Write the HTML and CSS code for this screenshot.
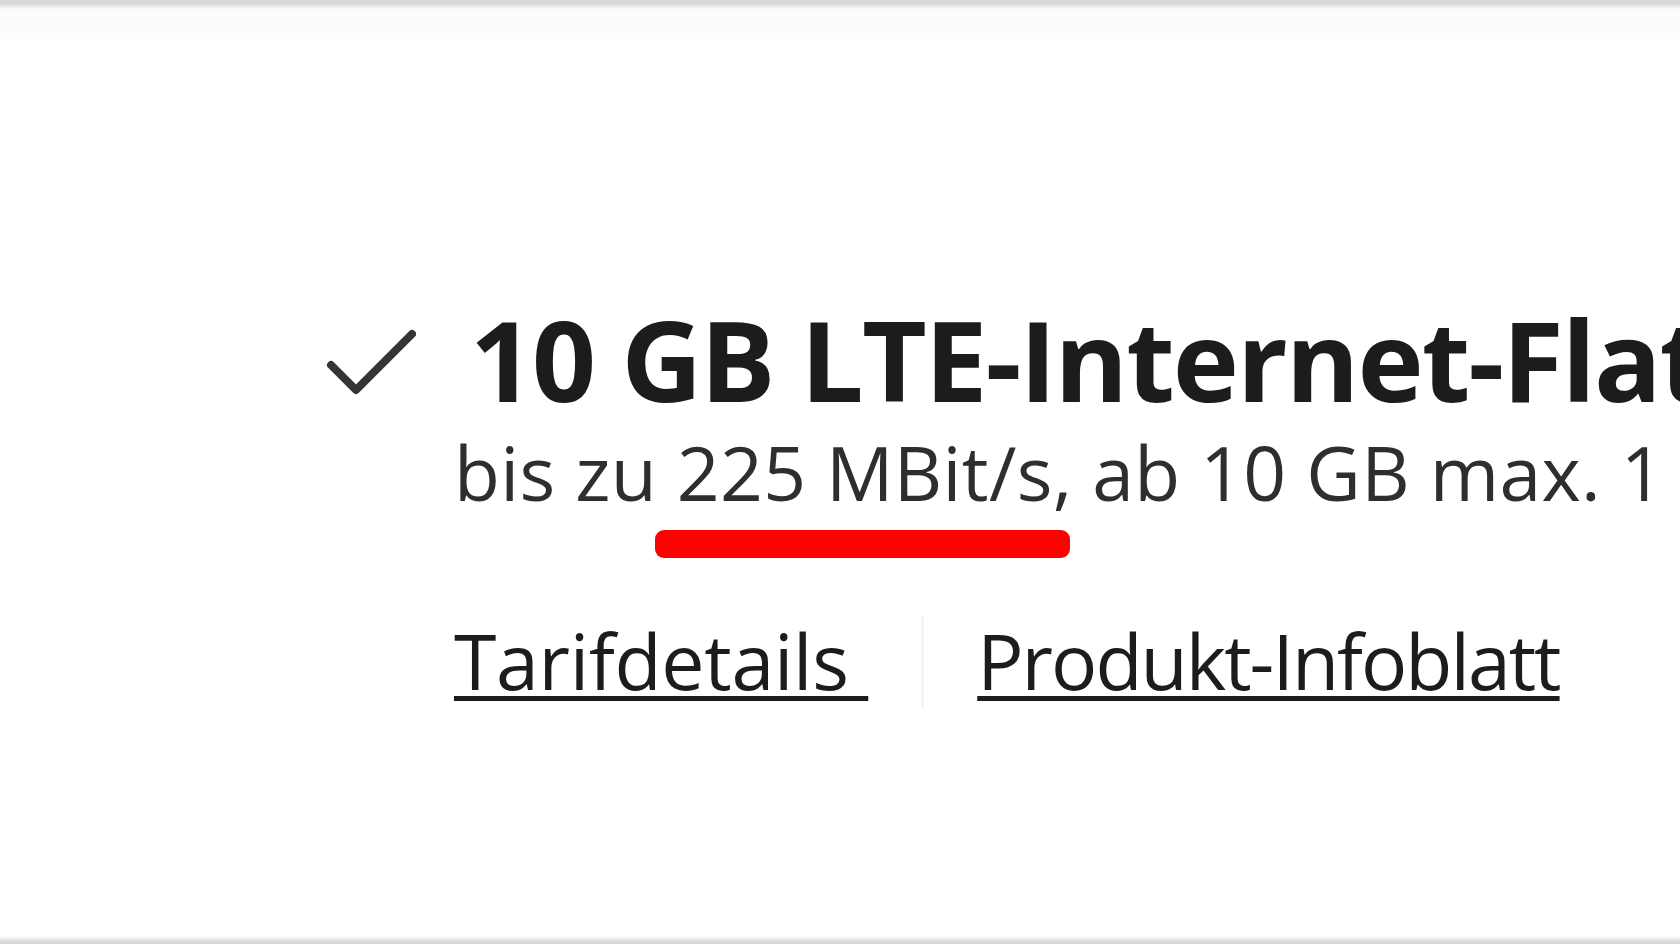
FILE: index.html
```html
<!DOCTYPE html>
<html lang="de">
<head>
<meta charset="utf-8">
<title>Tarif</title>
<link rel="stylesheet" href="styles.css">
</head>
<body>
<div class="frame">
  <div class="edge edge-top"></div>
  <main class="stage">
    <div class="feature">
      <svg class="check" viewBox="0 0 90 70" aria-hidden="true">
        <polyline points="5,36 30,61 86,5" fill="none" stroke="#353535" stroke-width="8" stroke-linecap="round" stroke-linejoin="round"/>
      </svg>
      <div class="text">
        <h2 class="title">10 GB LTE-Internet-Flat</h2>
        <p class="sub">bis zu <span class="mark">225 MBit/s,</span> ab 10 GB max. 1 MBit/s</p>
        <div class="links">
          <a class="link link-tarif" href="#">Tarifdetails&nbsp;</a>
          <span class="sep"></span>
          <a class="link link-info" href="#">Produkt-Infoblatt</a>
        </div>
      </div>
    </div>
  </main>
  <div class="edge edge-bottom"></div>
</div>
</body>
</html>
```

FILE: styles.css
```css
html, body {
  margin: 0;
  padding: 0;
  background: #ffffff;
}
body {
  width: 1680px;
  height: 944px;
  overflow: hidden;
  font-family: "Open Sans", "Noto Sans", "Liberation Sans", sans-serif;
  color: #222;
}
.frame {
  width: 1680px;
  height: 944px;
  display: flex;
  flex-direction: column;
  background: #fff;
}
.edge {
  flex: 0 0 auto;
}
.edge-top {
  height: 40px;
  background: linear-gradient(to bottom, #d8d8d8 0px, #d9d9d9 4px, #f6f6f6 8px, #fcfcfc 10px, #fcfcfc 38px, #ffffff 40px);
}
.edge-bottom {
  height: 8px;
  background: linear-gradient(to bottom, #ffffff 0px, #f2f2f2 2px, #d9d9d9 6px, #d8d8d8 8px);
}
.stage {
  flex: 1 1 auto;
  padding-top: 254px;
  padding-left: 326px;
}
.feature {
  display: flex;
  align-items: flex-start;
}
.check {
  width: 90px;
  height: 70px;
  margin-top: 35px;
  flex: 0 0 auto;
}
.text {
  margin-left: 38px;
  display: flex;
  flex-direction: column;
  white-space: nowrap;
}
.title {
  margin: 0 0 0 16px;
  font-size: 112px;
  line-height: 130px;
  font-weight: 700;
  color: #1c1c1c;
  letter-spacing: -2px;
}
.sub {
  margin: 2px 0 0 0;
  font-size: 75px;
  line-height: 92px;
  font-weight: 400;
  color: #2e2e2e;
  letter-spacing: 0.3px;
}
.mark {
  position: relative;
}
.mark::after {
  content: "";
  position: absolute;
  left: -22px;
  right: 2px;
  top: 109px;
  height: 28px;
  background: #ff0000;
  border-radius: 9px;
}
.links {
  margin-top: 93px;
  display: flex;
  align-items: center;
  gap: 53px;
  height: 100px;
}
.link {
  font-size: 77px;
  line-height: 100px;
  color: #1c1c1c;
  text-decoration: underline;
  text-decoration-thickness: 5px;
  text-underline-offset: 6px;
}
.link-tarif {
  letter-spacing: -0.3px;
}
.link-info {
  letter-spacing: -2px;
}
.sep {
  width: 3px;
  height: 91px;
  background: #f3f3f3;
}
```
